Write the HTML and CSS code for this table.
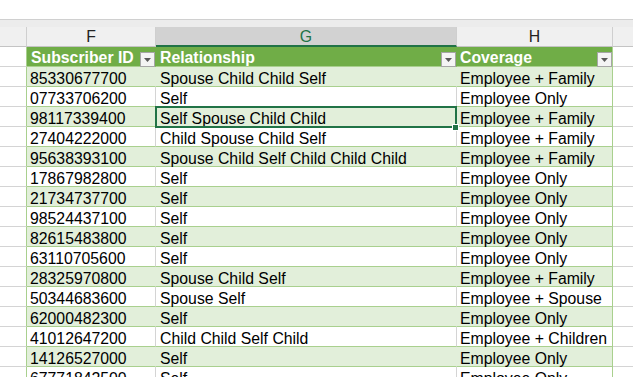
FILE: index.html
```html
<!DOCTYPE html>
<html>
<head>
<meta charset="utf-8">
<link rel="stylesheet" href="styles.css">
</head>
<body>
<div class="sheet">
  <div class="topbar"></div>
  <div class="strip"></div>
  <div class="row colhead">
    <div class="c"></div>
    <div class="c">F</div>
    <div class="c sel">G</div>
    <div class="c">H</div>
    <div class="c"></div>
  </div>
  <div class="row thead">
    <div class="c e"></div>
    <div class="c f">Subscriber ID<span class="fb"><svg width="7" height="4" viewBox="0 0 7 4"><polygon points="0,0 7,0 3.5,4" fill="#595959"/></svg></span></div>
    <div class="c g">Relationship<span class="fb"><svg width="7" height="4" viewBox="0 0 7 4"><polygon points="0,0 7,0 3.5,4" fill="#595959"/></svg></span></div>
    <div class="c h">Coverage<span class="fb"><svg width="7" height="4" viewBox="0 0 7 4"><polygon points="0,0 7,0 3.5,4" fill="#595959"/></svg></span></div>
    <div class="c i"></div>
  </div>
  <div class="row band"><div class="c e"></div><div class="c f">85330677700</div><div class="c g">Spouse Child Child Self</div><div class="c h">Employee + Family</div><div class="c i"></div></div>
  <div class="row"><div class="c e"></div><div class="c f">07733706200</div><div class="c g">Self</div><div class="c h">Employee Only</div><div class="c i"></div></div>
  <div class="row band"><div class="c e"></div><div class="c f">98117339400</div><div class="c g active">Self Spouse Child Child</div><div class="c h">Employee + Family</div><div class="c i"></div></div>
  <div class="row"><div class="c e"></div><div class="c f">27404222000</div><div class="c g">Child Spouse Child Self</div><div class="c h">Employee + Family</div><div class="c i"></div></div>
  <div class="row band"><div class="c e"></div><div class="c f">95638393100</div><div class="c g">Spouse Child Self Child Child Child</div><div class="c h">Employee + Family</div><div class="c i"></div></div>
  <div class="row"><div class="c e"></div><div class="c f">17867982800</div><div class="c g">Self</div><div class="c h">Employee Only</div><div class="c i"></div></div>
  <div class="row band"><div class="c e"></div><div class="c f">21734737700</div><div class="c g">Self</div><div class="c h">Employee Only</div><div class="c i"></div></div>
  <div class="row"><div class="c e"></div><div class="c f">98524437100</div><div class="c g">Self</div><div class="c h">Employee Only</div><div class="c i"></div></div>
  <div class="row band"><div class="c e"></div><div class="c f">82615483800</div><div class="c g">Self</div><div class="c h">Employee Only</div><div class="c i"></div></div>
  <div class="row"><div class="c e"></div><div class="c f">63110705600</div><div class="c g">Self</div><div class="c h">Employee Only</div><div class="c i"></div></div>
  <div class="row band"><div class="c e"></div><div class="c f">28325970800</div><div class="c g">Spouse Child Self</div><div class="c h">Employee + Family</div><div class="c i"></div></div>
  <div class="row"><div class="c e"></div><div class="c f">50344683600</div><div class="c g">Spouse Self</div><div class="c h">Employee + Spouse</div><div class="c i"></div></div>
  <div class="row band"><div class="c e"></div><div class="c f">62000482300</div><div class="c g">Self</div><div class="c h">Employee Only</div><div class="c i"></div></div>
  <div class="row"><div class="c e"></div><div class="c f">41012647200</div><div class="c g">Child Child Self Child</div><div class="c h">Employee + Children</div><div class="c i"></div></div>
  <div class="row band"><div class="c e"></div><div class="c f">14126527000</div><div class="c g">Self</div><div class="c h">Employee Only</div><div class="c i"></div></div>
  <div class="row"><div class="c e"></div><div class="c f">67771842500</div><div class="c g">Self</div><div class="c h">Employee Only</div><div class="c i"></div></div>
</div>
</body>
</html>
```
FILE: styles.css
```css
html, body {
  margin: 0;
  padding: 0;
  background: #ffffff;
  overflow: hidden;
}
.sheet {
  width: 633px;
  height: 377px;
  overflow: hidden;
  font-family: "Liberation Sans", Arial, sans-serif;
  font-size: 15.8px;
  color: #000000;
}
.topbar {
  height: 19px;
  background: #ffffff;
  border-bottom: 1px solid #d0d0d0;
}
.strip {
  height: 7px;
  background: #ececec;
}
.row {
  display: grid;
  grid-template-columns: 27px 129px 301px 156px 1fr;
  height: 20px;
}
.c {
  box-sizing: border-box;
  height: 20px;
  line-height: 19px;
  padding-top: 2px;
  padding-left: 3px;
  white-space: nowrap;
  overflow: visible;
  border-right: 1px solid #d4d4d4;
  border-bottom: 1px solid #d4d4d4;
  background: #ffffff;
}
.g { padding-left: 4px; }

/* column letters */
.colhead .c {
  background: #f0f0f0;
  text-align: center;
  padding-left: 0;
  padding-top: 1px;
  line-height: 18px;
  color: #222222;
  border-right-color: #cfcfcf;
  border-bottom-color: #c4c4c4;
}
.colhead .c:last-child { border-right: none; }
.colhead .sel {
  background: #d2d2d2;
  color: #217346;
  border-bottom: 2px solid #217346;
  line-height: 17px;
}

/* table body */
.row .e { border-right-color: #a9d08e; }
.row .f, .row .g, .row .h { border-bottom-color: #a9d08e; }
.row .h { border-right-color: #a9d08e; }
.row .i { border-right: none; }

.band .f, .band .g, .band .h { background: #e2efda; }
.band .f, .band .g { border-right-color: #e2efda; }

/* table header */
.thead .f, .thead .g, .thead .h {
  background: #70ad47;
  color: #ffffff;
  font-weight: bold;
  position: relative;
  padding-top: 1px;
}
.thead .f, .thead .g { border-right-color: #70ad47; }
.thead .f { padding-left: 4px; }
.fb {
  position: absolute;
  right: 0;
  bottom: -1px;
  width: 15px;
  height: 15px;
  box-sizing: border-box;
  border: 1px solid #a6a6a6;
  background: #f4f4f4;
  display: flex;
  align-items: center;
  justify-content: center;
}
.fb svg { display: block; margin-top: 1px; }

/* active cell */
.active {
  position: relative;
}
.active::after {
  content: "";
  position: absolute;
  left: -1px;
  right: -1px;
  top: -1px;
  bottom: -2px;
  border: 2px solid #217346;
  z-index: 2;
}
.active::before {
  content: "";
  position: absolute;
  right: -3px;
  bottom: -5px;
  width: 5px;
  height: 5px;
  background: #217346;
  border: 1px solid #ffffff;
  z-index: 3;
}
```
